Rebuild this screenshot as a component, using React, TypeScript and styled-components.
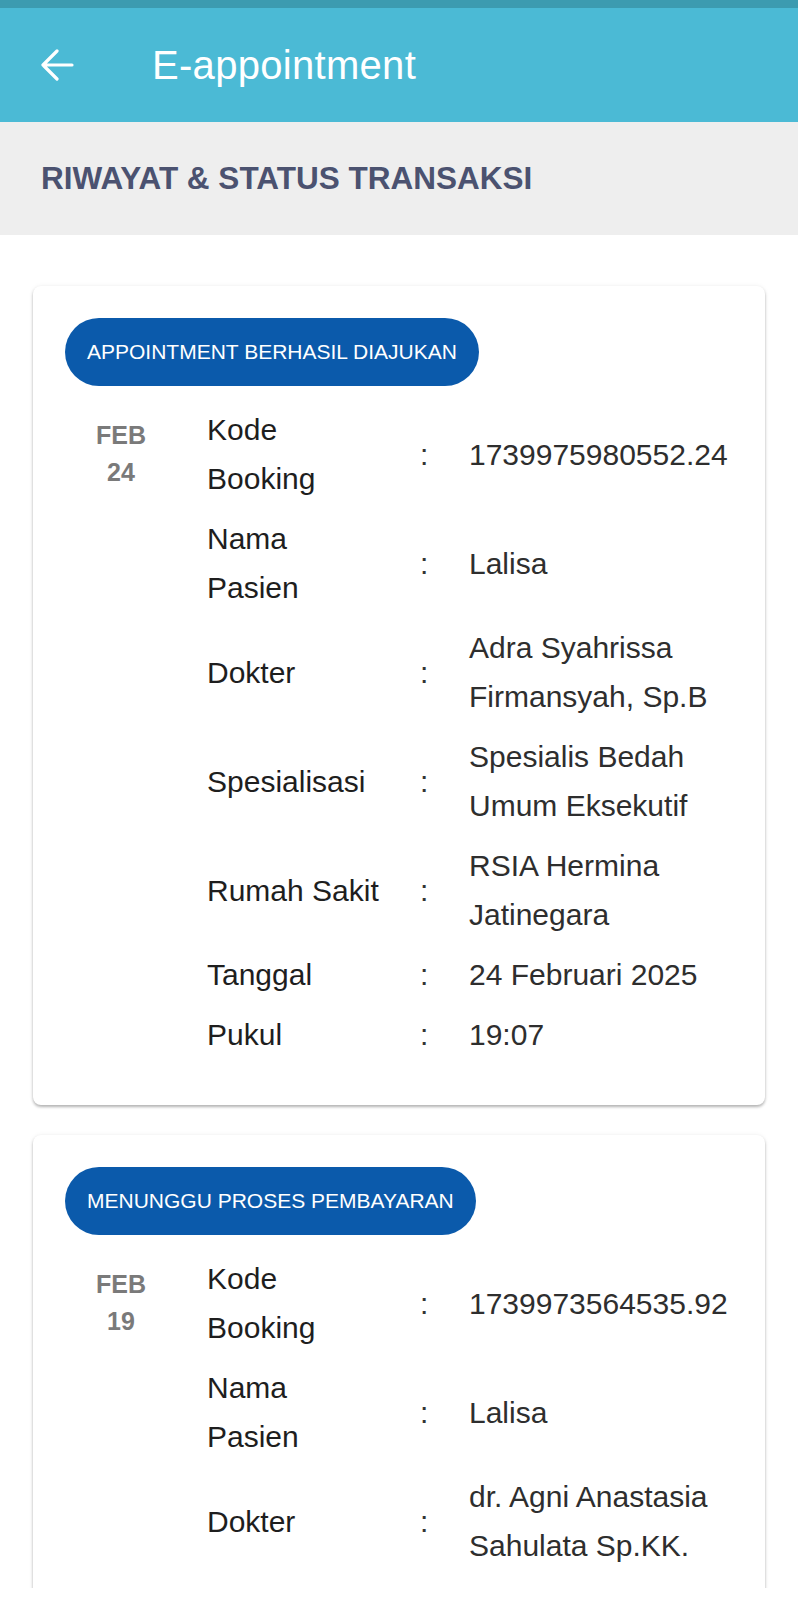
import React from 'react';
import styled, { createGlobalStyle } from 'styled-components';

// Data riwayat appointment
interface Field {
  label: string;
  value: string;
}

interface Appointment {
  status: string;
  month: string;
  day: string;
  fields: Field[];
}

const appointments: Appointment[] = [
  {
    status: 'APPOINTMENT BERHASIL DIAJUKAN',
    month: 'FEB',
    day: '24',
    fields: [
      { label: 'Kode\nBooking', value: '1739975980552.24' },
      { label: 'Nama\nPasien', value: 'Lalisa' },
      { label: 'Dokter', value: 'Adra Syahrissa Firmansyah, Sp.B' },
      { label: 'Spesialisasi', value: 'Spesialis Bedah Umum Eksekutif' },
      { label: 'Rumah Sakit', value: 'RSIA Hermina Jatinegara' },
      { label: 'Tanggal', value: '24 Februari 2025' },
      { label: 'Pukul', value: '19:07' },
    ],
  },
  {
    status: 'MENUNGGU PROSES PEMBAYARAN',
    month: 'FEB',
    day: '19',
    fields: [
      { label: 'Kode\nBooking', value: '1739973564535.92' },
      { label: 'Nama\nPasien', value: 'Lalisa' },
      { label: 'Dokter', value: 'dr. Agni Anastasia Sahulata Sp.KK.' },
    ],
  },
];

const GlobalStyle = createGlobalStyle`
  html, body {
    margin: 0;
    padding: 0;
    background: #ffffff;
    font-family: "Liberation Sans", Arial, sans-serif;
  }
`;

const App: React.FC = () => {
  return (
    <Screen>
      <GlobalStyle />
      <StatusStrip />
      <AppBar>
        <BackButton aria-label="Kembali">
          <svg width="34" height="32" viewBox="0 0 34 32" fill="none">
            <path
              d="M32 16H3M17 2L3 16l14 14"
              stroke="#ffffff"
              strokeWidth="3.2"
              strokeLinecap="round"
              strokeLinejoin="round"
            />
          </svg>
        </BackButton>
        <AppTitle>E-appointment</AppTitle>
      </AppBar>
      <SectionBar>
        <SectionTitle>RIWAYAT &amp; STATUS TRANSAKSI</SectionTitle>
      </SectionBar>
      <List>
        {appointments.map((item) => (
          <Card key={item.fields[0].value}>
            <StatusBadge>{item.status}</StatusBadge>
            <Rows>
              {item.fields.map((field, i) => (
                <Row key={field.label}>
                  <DateCell>
                    {i === 0 && (
                      <>
                        <span>{item.month}</span>
                        <span>{item.day}</span>
                      </>
                    )}
                  </DateCell>
                  <Label>{field.label}</Label>
                  <Colon>:</Colon>
                  <Value>{field.value}</Value>
                </Row>
              ))}
            </Rows>
          </Card>
        ))}
      </List>
    </Screen>
  );
};

const Screen = styled.div`
  height: 1588px;
  overflow: hidden;
  background: #ffffff;
`;

const StatusStrip = styled.div`
  height: 8px;
  background: #3c9bb0;
`;

const AppBar = styled.header`
  height: 114px;
  background: #4bbad5;
  display: flex;
  align-items: center;
  padding-left: 40px;
`;

const BackButton = styled.button`
  border: none;
  background: transparent;
  padding: 0;
  display: flex;
  align-items: center;
  cursor: pointer;
`;

const AppTitle = styled.h1`
  margin: 0 0 0 78px;
  font-size: 40px;
  font-weight: 400;
  color: #ffffff;
  letter-spacing: 0.3px;
`;

const SectionBar = styled.div`
  height: 113px;
  background: #eeeeee;
  display: flex;
  align-items: center;
  padding-left: 41px;
`;

const SectionTitle = styled.h2`
  margin: 0;
  font-size: 31.5px;
  font-weight: 700;
  color: #4b5270;
`;

const List = styled.div`
  padding: 51px 33px 0;
  display: flex;
  flex-direction: column;
  gap: 30px;
`;

const Card = styled.div`
  background: #ffffff;
  border-radius: 8px;
  padding: 32px 24px 46px 32px;
  box-shadow: 0 2px 3px rgba(0, 0, 0, 0.28), 0 0 5px rgba(0, 0, 0, 0.06);
`;

const StatusBadge = styled.div`
  display: inline-flex;
  align-items: center;
  height: 68px;
  padding: 0 22px;
  border-radius: 34px;
  background: #0b5aab;
  color: #ffffff;
  font-size: 21px;
  white-space: nowrap;
`;

const Rows = styled.div`
  margin-top: 19px;
  display: flex;
  flex-direction: column;
  gap: 11px;
`;

const Row = styled.div`
  display: grid;
  grid-template-columns: 142px 213px 49px 1fr;
  align-items: center;
  font-size: 30px;
  line-height: 49px;
`;

const DateCell = styled.div`
  align-self: start;
  width: 112px;
  margin-top: 12px;
  display: flex;
  flex-direction: column;
  align-items: center;
  font-size: 25px;
  line-height: 37px;
  font-weight: 700;
  color: #7a7a7a;
`;

const Label = styled.div`
  white-space: pre-line;
  color: #1e1e1e;
`;

const Colon = styled.div`
  color: #333333;
`;

const Value = styled.div`
  color: #2e2e2e;
`;

export default App;
